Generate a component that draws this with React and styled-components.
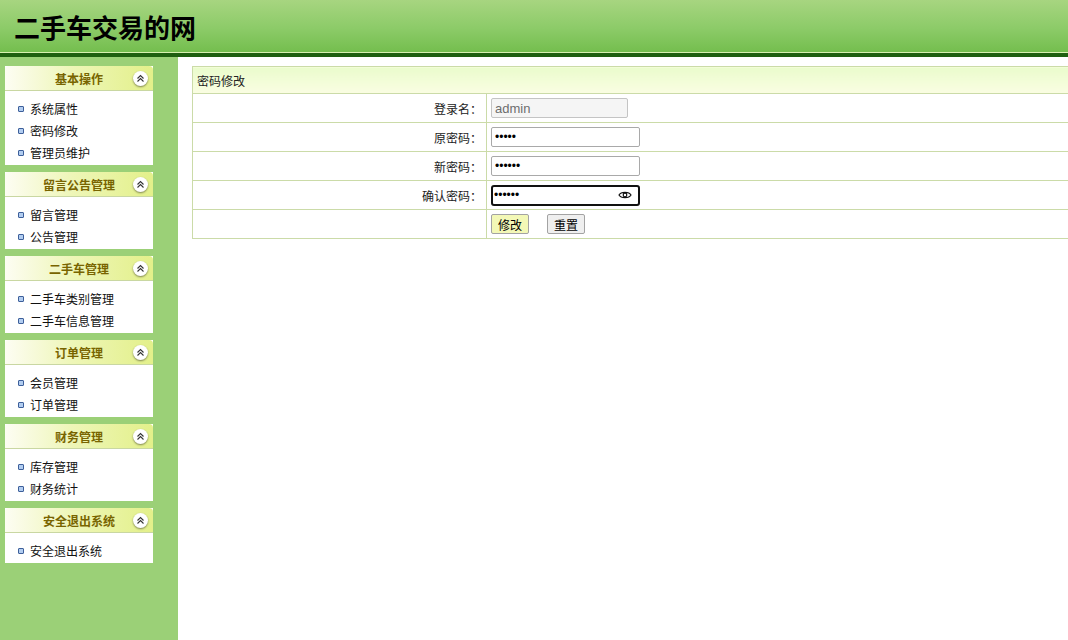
import React from "react";
import styled, { createGlobalStyle } from "styled-components";

const GlobalStyle = createGlobalStyle`
  html, body {
    margin: 0;
    padding: 0;
    height: 100%;
    background: #ffffff;
    font-family: "Microsoft YaHei", "Noto Sans CJK SC", "Liberation Sans", sans-serif;
    font-size: 12px;
  }
  #root {
    height: 100%;
  }
`;

const menus = [
  { title: "基本操作", items: ["系统属性", "密码修改", "管理员维护"] },
  { title: "留言公告管理", items: ["留言管理", "公告管理"] },
  { title: "二手车管理", items: ["二手车类别管理", "二手车信息管理"] },
  { title: "订单管理", items: ["会员管理", "订单管理"] },
  { title: "财务管理", items: ["库存管理", "财务统计"] },
  { title: "安全退出系统", items: ["安全退出系统"] },
];

function Collapse() {
  return (
    <CollapseBtn>
      <svg width="9" height="9" viewBox="0 0 9 9">
        <path d="M1.5 4.5 L4.5 1.5 L7.5 4.5 M1.5 7.5 L4.5 4.5 L7.5 7.5" fill="none" stroke="#333" strokeWidth="1.1" />
      </svg>
    </CollapseBtn>
  );
}

function Eye() {
  return (
    <EyeIcon width="14" height="10" viewBox="0 0 14 10">
      <path d="M1 5 C3 1.5 11 1.5 13 5 C11 8.5 3 8.5 1 5 Z" fill="none" stroke="#111" strokeWidth="1.2" />
      <circle cx="7" cy="5" r="1.8" fill="none" stroke="#111" strokeWidth="1.2" />
    </EyeIcon>
  );
}

export default function App() {
  return (
    <>
      <GlobalStyle />
      <Page>
        <Header>
          <Logo>二手车交易的网</Logo>
        </Header>
        <Body>
          <Sidebar>
            {menus.map((m) => (
              <Panel key={m.title}>
                <PanelHead>
                  <PanelTitle>{m.title}</PanelTitle>
                  <Collapse />
                </PanelHead>
                <PanelList>
                  {m.items.map((it) => (
                    <PanelItem key={it}>
                      <Bullet />
                      {it}
                    </PanelItem>
                  ))}
                </PanelList>
              </Panel>
            ))}
          </Sidebar>
          <Main>
            <FormTable>
              <tbody>
                <tr>
                  <TitleCell colSpan={2}>密码修改</TitleCell>
                </tr>
                <tr>
                  <LabelCell>登录名：</LabelCell>
                  <FieldCell>
                    <Input value="admin" disabled readOnly $w={137} />
                  </FieldCell>
                </tr>
                <tr>
                  <LabelCell>原密码：</LabelCell>
                  <FieldCell>
                    <Input type="password" value="12345" readOnly $w={149} />
                  </FieldCell>
                </tr>
                <tr>
                  <LabelCell>新密码：</LabelCell>
                  <FieldCell>
                    <Input type="password" value="123456" readOnly $w={149} />
                  </FieldCell>
                </tr>
                <tr>
                  <LabelCell>确认密码：</LabelCell>
                  <FieldCell>
                    <FocusWrap>
                      <FocusInput type="password" value="123456" readOnly />
                      <Eye />
                    </FocusWrap>
                  </FieldCell>
                </tr>
                <tr>
                  <LabelCell />
                  <FieldCell>
                    <Button $primary>修改</Button>
                    <Button>重置</Button>
                  </FieldCell>
                </tr>
              </tbody>
            </FormTable>
          </Main>
        </Body>
      </Page>
    </>
  );
}

const Page = styled.div`
  display: flex;
  flex-direction: column;
  height: 100%;
  min-height: 640px;
  overflow: hidden;
`;

const Header = styled.div`
  height: 52px;
  background: linear-gradient(to bottom, #a7d580 0%, #8ccb68 55%, #74be4e 100%);
  border-bottom: 1px solid #d8f0b0;
  box-shadow: 0 4px 0 #1f5f10;
  margin-bottom: 4px;
  display: flex;
  align-items: center;
  padding-left: 14px;
  flex-shrink: 0;
`;

const Logo = styled.h1`
  margin: 0;
  font-size: 26px;
  font-weight: bold;
  color: #000;
  font-family: "Noto Sans CJK SC", "Microsoft YaHei", sans-serif;
`;

const Body = styled.div`
  flex: 1;
  display: flex;
`;

const Sidebar = styled.div`
  width: 178px;
  flex-shrink: 0;
  background: #9bd077;
  padding: 9px 0 0 5px;
  box-sizing: border-box;
  display: flex;
  flex-direction: column;
  gap: 7px;
`;

const Panel = styled.div`
  width: 148px;
  background: #fff;
`;

const PanelHead = styled.div`
  height: 24px;
  border-radius: 4px 4px 0 0;
  border-bottom: 1px solid #c9d7a2;
  background: linear-gradient(to right, #fdfdf3 0%, #eef6b8 45%, #e3f08a 100%);
  display: flex;
  align-items: center;
  justify-content: center;
  position: relative;
`;

const PanelTitle = styled.span`
  font-weight: bold;
  font-size: 12px;
  color: #786400;
`;

const CollapseBtn = styled.span`
  position: absolute;
  right: 5px;
  top: 5px;
  width: 15px;
  height: 15px;
  border-radius: 50%;
  background: #fff;
  box-shadow: 0 1px 2px rgba(0, 0, 0, 0.45);
  display: flex;
  align-items: center;
  justify-content: center;
`;

const PanelList = styled.ul`
  list-style: none;
  margin: 0;
  padding: 7px 0 1px 13px;
`;

const PanelItem = styled.li`
  height: 22px;
  line-height: 22px;
  display: flex;
  align-items: center;
  color: #111;
  font-size: 12px;
`;

const Bullet = styled.span`
  width: 4px;
  height: 4px;
  border: 1px solid #3d5f9a;
  background: #b2cdf0;
  margin-right: 6px;
  border-radius: 1px;
`;

const Main = styled.div`
  flex: 1;
  padding: 9px 0 0 14px;
  overflow: hidden;
  background: #fff;
`;

const FormTable = styled.table`
  width: 900px;
  border-collapse: collapse;
  border: 1px solid #cbdba8;
  font-size: 12px;
  color: #222;
`;

const TitleCell = styled.td`
  height: 26px;
  padding: 0 0 0 4px;
  border: 1px solid #cbdba8;
  background: linear-gradient(to bottom, #eafccc, #fafde2);
  color: #222;
`;

const LabelCell = styled.td`
  width: 289px;
  height: 28px;
  padding: 0 4px 0 0;
  text-align: right;
  border: 1px solid #cbdba8;
`;

const FieldCell = styled.td`
  height: 28px;
  padding: 0 0 0 4px;
  border: 1px solid #cbdba8;
`;

const Input = styled.input`
  box-sizing: border-box;
  width: ${(p) => p.$w}px;
  height: 20px;
  padding: 0 3px;
  border: 1px solid #a9a9a9;
  border-radius: 2px;
  font-size: 12px;
  font-family: "Liberation Sans", sans-serif;
  vertical-align: middle;
  color: #000;
  background: #fff;
  &:disabled {
    background: #f5f5f5;
    color: #6d6d6d;
    border-color: #c4c4c4;
    font-size: 13px;
  }
`;

const FocusWrap = styled.span`
  box-sizing: border-box;
  display: inline-flex;
  align-items: center;
  width: 149px;
  height: 21px;
  border: 2px solid #111;
  border-radius: 3px;
  vertical-align: middle;
  padding-right: 6px;
`;

const FocusInput = styled.input`
  flex: 1;
  min-width: 0;
  border: none;
  outline: none;
  padding: 0 1px;
  font-size: 12px;
  font-family: "Liberation Sans", sans-serif;
  background: transparent;
`;

const EyeIcon = styled.svg`
  flex-shrink: 0;
`;

const Button = styled.button`
  height: 20px;
  padding: 0 6px;
  margin-right: 18px;
  font-size: 12px;
  font-family: "Microsoft YaHei", "Noto Sans CJK SC", sans-serif;
  color: #000;
  border: 1px solid #a3a3a3;
  border-radius: 2px;
  background: ${(p) => (p.$primary ? "#f3f8b6" : "#efefef")};
  vertical-align: middle;
`;
